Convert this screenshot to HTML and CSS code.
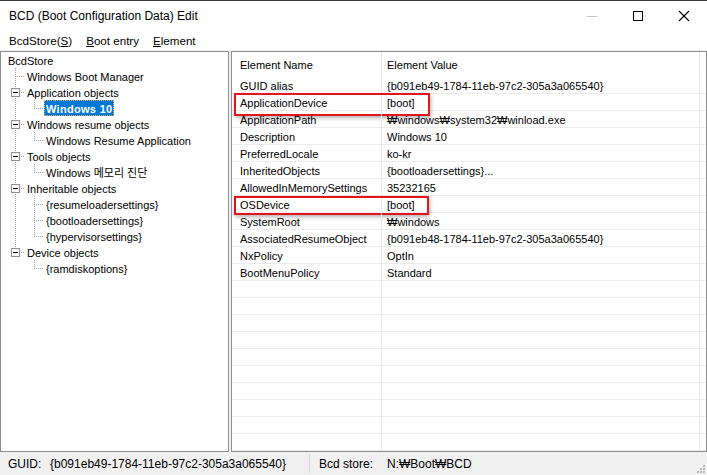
FILE: index.html
```html
<!DOCTYPE html>
<html lang="ko">
<head>
<meta charset="utf-8">
<title>BCD (Boot Configuration Data) Edit</title>
<link rel="stylesheet" href="styles.css">
</head>
<body>
<div class="window">
  <div class="titlebar">
    <span class="title">BCD (Boot Configuration Data) Edit</span>
    <div class="controls">
      <span class="ctl"><svg width="12" height="12" viewBox="0 0 12 12"><path d="M1 6.5h10" stroke="#c4c4c4" stroke-width="1"/></svg></span>
      <span class="ctl"><svg width="12" height="12" viewBox="0 0 12 12"><rect x="1.5" y="1.5" width="9" height="9" fill="none" stroke="#000" stroke-width="1"/></svg></span>
      <span class="ctl"><svg width="12" height="12" viewBox="0 0 12 12"><path d="M1 1L11 11M11 1L1 11" stroke="#000" stroke-width="1.1"/></svg></span>
    </div>
  </div>
  <div class="menubar">
    <span class="menu">BcdStore(<u>S</u>)</span>
    <span class="menu"><u>B</u>oot entry</span>
    <span class="menu"><u>E</u>lement</span>
  </div>
  <div class="main">
    <div class="pane tree">
      <div class="node"><span class="lbl">BcdStore</span></div>
      <div class="node"><span class="g tee"></span><span class="lbl">Windows Boot Manager</span></div>
      <div class="node"><span class="g tee"><span class="box"></span></span><span class="lbl">Application objects</span></div>
      <div class="node"><span class="g pipe"></span><span class="g elbow"></span><span class="lbl sel">Windows 10</span></div>
      <div class="node"><span class="g tee"><span class="box"></span></span><span class="lbl">Windows resume objects</span></div>
      <div class="node"><span class="g pipe"></span><span class="g elbow"></span><span class="lbl">Windows Resume Application</span></div>
      <div class="node"><span class="g tee"><span class="box"></span></span><span class="lbl">Tools objects</span></div>
      <div class="node"><span class="g pipe"></span><span class="g elbow"></span><span class="lbl">Windows 메모리 진단</span></div>
      <div class="node"><span class="g tee"><span class="box"></span></span><span class="lbl">Inheritable objects</span></div>
      <div class="node"><span class="g pipe"></span><span class="g tee"></span><span class="lbl">{resumeloadersettings}</span></div>
      <div class="node"><span class="g pipe"></span><span class="g tee"></span><span class="lbl">{bootloadersettings}</span></div>
      <div class="node"><span class="g pipe"></span><span class="g elbow"></span><span class="lbl">{hypervisorsettings}</span></div>
      <div class="node"><span class="g elbow"><span class="box"></span></span><span class="lbl">Device objects</span></div>
      <div class="node"><span class="g"></span><span class="g elbow"></span><span class="lbl">{ramdiskoptions}</span></div>
    </div>
    <div class="pane list">
      <div class="lhead">
        <span class="c1">Element Name</span>
        <span class="c2">Element Value</span>
        <span class="c3"></span>
      </div>
      <div class="row"><span class="c1">GUID alias</span><span class="c2">{b091eb49-1784-11eb-97c2-305a3a065540}</span><span class="c3"></span></div>
      <div class="row"><span class="c1">ApplicationDevice</span><span class="c2">[boot]</span><span class="c3"></span><span class="hl hl-a"></span></div>
      <div class="row"><span class="c1">ApplicationPath</span><span class="c2">₩windows₩system32₩winload.exe</span><span class="c3"></span></div>
      <div class="row"><span class="c1">Description</span><span class="c2">Windows 10</span><span class="c3"></span></div>
      <div class="row"><span class="c1">PreferredLocale</span><span class="c2">ko-kr</span><span class="c3"></span></div>
      <div class="row"><span class="c1">InheritedObjects</span><span class="c2">{bootloadersettings}...</span><span class="c3"></span></div>
      <div class="row"><span class="c1">AllowedInMemorySettings</span><span class="c2">35232165</span><span class="c3"></span></div>
      <div class="row"><span class="c1">OSDevice</span><span class="c2">[boot]</span><span class="c3"></span><span class="hl hl-b"></span></div>
      <div class="row"><span class="c1">SystemRoot</span><span class="c2">₩windows</span><span class="c3"></span></div>
      <div class="row"><span class="c1">AssociatedResumeObject</span><span class="c2">{b091eb48-1784-11eb-97c2-305a3a065540}</span><span class="c3"></span></div>
      <div class="row"><span class="c1">NxPolicy</span><span class="c2">OptIn</span><span class="c3"></span></div>
      <div class="row"><span class="c1">BootMenuPolicy</span><span class="c2">Standard</span><span class="c3"></span></div>
      <div class="fill"></div>
    </div>
  </div>
  <div class="statusbar">
    <div class="sitem s1"><span class="slabel l1">GUID:</span><span>{b091eb49-1784-11eb-97c2-305a3a065540}</span></div>
    <div class="sitem s2"><span class="slabel l2">Bcd store:</span><span>N:₩Boot₩BCD</span></div>
    <span class="grip"><svg width="12" height="12" viewBox="0 0 12 12"><g fill="#b8b8b8"><rect x="9" y="3" width="2" height="2"/><rect x="6" y="6" width="2" height="2"/><rect x="9" y="6" width="2" height="2"/><rect x="3" y="9" width="2" height="2"/><rect x="6" y="9" width="2" height="2"/><rect x="9" y="9" width="2" height="2"/></g></svg></span>
  </div>
</div>
</body>
</html>
```
FILE: styles.css
```css
html, body {
  margin: 0;
  padding: 0;
}
body {
  width: 707px;
  height: 475px;
  overflow: hidden;
  background: #fff;
  font-family: "Liberation Sans", "Noto Sans CJK KR", sans-serif;
  color: #000;
}
.window {
  height: 475px;
  display: flex;
  flex-direction: column;
  box-sizing: border-box;
  border-top: 1px solid #3a3a3a;
}
.titlebar {
  height: 29px;
  display: flex;
  align-items: center;
  background: #fff;
  flex: none;
}
.title {
  padding-left: 9px;
  font-size: 12px;
  flex: 1;
  white-space: nowrap;
}
.controls {
  display: flex;
  height: 29px;
}
.ctl {
  width: 46px;
  height: 29px;
  display: flex;
  align-items: center;
  justify-content: center;
}
.menubar {
  height: 20px;
  display: flex;
  align-items: center;
  padding-left: 2px;
  font-size: 11.6px;
  background: #fff;
  flex: none;
}
.menu {
  padding: 0 7px;
  white-space: nowrap;
}
.menu u {
  text-underline-offset: 1px;
}
.main {
  flex: 1;
  display: flex;
  gap: 2px;
  background: #f0f0f0;
  padding-top: 1px;
  min-height: 0;
}
.pane {
  background: #fff;
  border: 1px solid #8e8e8e;
  box-sizing: border-box;
  font-size: 11px;
  overflow: hidden;
}
.tree {
  width: 229px;
  padding-left: 5px;
  flex: none;
}
.node {
  height: 16px;
  display: flex;
  align-items: center;
}
.g {
  width: 19px;
  height: 16px;
  position: relative;
  flex: none;
}
.g.pipe::before,
.g.tee::before,
.g.elbow::before {
  content: "";
  position: absolute;
  left: 9px;
  top: 0;
  width: 1px;
  height: 16px;
  background: repeating-linear-gradient(to bottom, #a0a0a0 0 1px, transparent 1px 2px);
}
.g.elbow::before {
  height: 9px;
}
.g.tee::after,
.g.elbow::after {
  content: "";
  position: absolute;
  left: 11px;
  top: 8px;
  width: 8px;
  height: 1px;
  background: repeating-linear-gradient(to right, #a0a0a0 0 1px, transparent 1px 2px);
}
.box {
  position: absolute;
  left: 5px;
  top: 4px;
  width: 9px;
  height: 9px;
  box-sizing: border-box;
  border: 1px solid #919191;
  background: #fff;
  z-index: 1;
}
.box::before {
  content: "";
  position: absolute;
  left: 1px;
  top: 3px;
  width: 5px;
  height: 1px;
  background: #000;
}
.lbl {
  height: 16px;
  line-height: 18px;
  padding: 0 2px;
  white-space: nowrap;
  box-sizing: border-box;
}
.lbl.sel {
  background: #0078d7;
  color: #fff;
  font-weight: bold;
  border: 1px dotted #e8a868;
  line-height: 16px;
  padding: 0 1px;
  letter-spacing: 0.3px;
}
.list {
  flex: 1;
  display: flex;
  flex-direction: column;
}
.lhead {
  height: 25px;
  display: flex;
  flex: none;
}
.lhead span {
  line-height: 26px;
  height: 25px;
  box-sizing: border-box;
}
.c1 {
  width: 150px;
  padding-left: 8px;
  border-right: 1px solid #ececec;
  box-sizing: border-box;
  flex: none;
  white-space: nowrap;
  overflow: hidden;
}
.c2 {
  width: 318px;
  padding-left: 5px;
  border-right: 1px solid #ececec;
  box-sizing: border-box;
  flex: none;
  white-space: nowrap;
  overflow: hidden;
}
.c3 {
  flex: 1;
}
.lhead .c1,
.lhead .c2 {
  border-right-color: #e5e5e5;
}
.row {
  height: 17px;
  display: flex;
  border-bottom: 1px solid #ececec;
  box-sizing: border-box;
  position: relative;
  flex: none;
}
.row span {
  line-height: 18px;
  height: 16px;
}
.hl {
  position: absolute;
  border: 2px solid #e3141c;
  box-sizing: border-box;
  box-shadow: 1px 2px 4px rgba(0, 0, 0, 0.3);
  pointer-events: none;
}
.row .hl {
  height: auto;
}
.hl-a {
  left: 2px;
  top: -1px;
  width: 196px;
  height: 23px !important;
}
.hl-b {
  left: 2px;
  top: 0;
  width: 195px;
  height: 19px !important;
}
.fill {
  flex: 1;
  background-image:
    linear-gradient(to right, transparent 149px, #ececec 149px, #ececec 150px, transparent 150px, transparent 467px, #ececec 467px, #ececec 468px, transparent 468px),
    repeating-linear-gradient(to bottom, transparent 0, transparent 16px, #ececec 16px, #ececec 17px);
}
.statusbar {
  height: 23px;
  flex: none;
  display: flex;
  align-items: center;
  background: #f0f0f0;
  font-size: 12px;
  position: relative;
}
.sitem {
  display: flex;
  align-items: center;
  height: 19px;
  white-space: nowrap;
}
.s1 {
  width: 310px;
  padding-left: 8px;
  box-sizing: border-box;
  border-right: 1px solid #d9d9d9;
}
.s2 {
  padding-left: 9px;
  flex: 1;
}
.l1 {
  width: 42px;
}
.l2 {
  width: 68px;
}
.grip {
  position: absolute;
  right: 1px;
  bottom: 1px;
  width: 12px;
  height: 12px;
}
```
